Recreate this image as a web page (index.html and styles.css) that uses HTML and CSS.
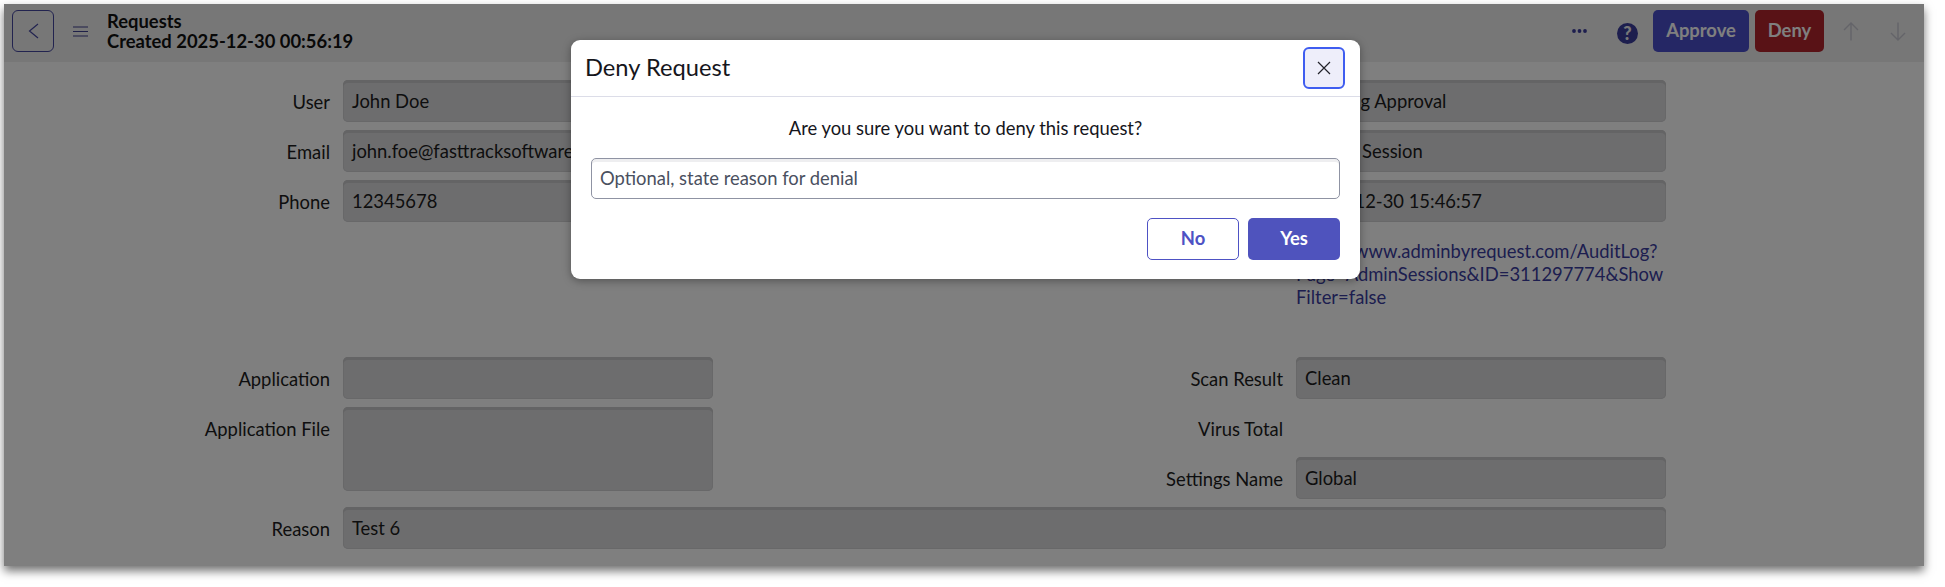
FILE: index.html
```html
<!DOCTYPE html>
<html lang="en">
<head>
<meta charset="utf-8">
<title>Requests</title>
<link rel="stylesheet" href="styles.css">
</head>
<body>
<div class="window">
  <header class="topbar">
    <button class="back" aria-label="Back">
      <svg width="11" height="16" viewBox="0 0 11 16"><path d="M10 1 L1.5 8 L10 15" /></svg>
    </button>
    <button class="menu" aria-label="Menu">
      <svg width="15" height="11" viewBox="0 0 15 11"><path d="M0 1H15M0 5.5H15M0 10H15" /></svg>
    </button>
    <div class="heading">
      <div>Requests</div>
      <div>Created 2025-12-30 00:56:19</div>
    </div>
    <div class="actions">
      <svg class="dots" width="15" height="4" viewBox="0 0 15 4"><circle cx="2" cy="2" r="1.9"/><circle cx="7.5" cy="2" r="1.9"/><circle cx="13" cy="2" r="1.9"/></svg>
      <span class="help">?</span>
      <button class="btn approve">Approve</button>
      <button class="btn deny">Deny</button>
      <button class="nav" aria-label="Previous">
        <svg width="16" height="19" viewBox="0 0 16 19"><path d="M8 18.5V1M1 8L8 1L15 8" /></svg>
      </button>
      <button class="nav" aria-label="Next">
        <svg width="16" height="19" viewBox="0 0 16 19"><path d="M8 .5V18M1 11L8 18L15 11" /></svg>
      </button>
    </div>
  </header>

  <main class="form">
    <label class="lbl">User</label><div class="field">John Doe</div>
    <label class="lbl">Status</label><div class="field">Pending Approval</div>

    <label class="lbl">Email</label><div class="field">john.foe@fasttracksoftware.com</div>
    <label class="lbl">Type</label><div class="field">Admin Session</div>

    <label class="lbl">Phone</label><div class="field">12345678</div>
    <label class="lbl">Expires</label><div class="field">2025-12-30 15:46:57</div>

    <label class="lbl link-lbl">Audit Log</label>
    <a class="link" href="#">https://www.adminbyrequest.com/AuditLog?Page=AdminSessions&amp;ID=311297774&amp;ShowFilter=false</a>

    <label class="lbl">Application</label><div class="field"></div>
    <label class="lbl">Scan Result</label><div class="field">Clean</div>

    <label class="lbl span-rows">Application File</label><div class="field area"></div>
    <label class="lbl">Virus Total</label><div class="empty"></div>

    <label class="lbl">Settings Name</label><div class="field">Global</div>

    <label class="lbl">Reason</label><div class="field wide">Test 6</div>
  </main>

  <div class="overlay">
    <section class="modal">
      <div class="modal-head">
        <h2>Deny Request</h2>
        <button class="close" aria-label="Close">
          <svg width="14" height="14" viewBox="0 0 14 14"><path d="M1 1L13 13M13 1L1 13" /></svg>
        </button>
      </div>
      <div class="modal-body">
        <p>Are you sure you want to deny this request?</p>
        <div class="reason">Optional, state reason for denial</div>
        <div class="modal-actions">
          <button class="mbtn no">No</button>
          <button class="mbtn yes">Yes</button>
        </div>
      </div>
    </section>
  </div>
</div>
</body>
</html>
```

FILE: styles.css
```css
* { box-sizing: border-box; }
html, body { margin: 0; padding: 0; background: #fff; }
body { font-family: Lato, "Open Sans", sans-serif; color: #1c1c20; overflow: hidden; height: 587px; }
button { font-family: inherit; cursor: pointer; padding: 0; background: none; border: 0; }

.window {
  position: relative;
  width: 1920px;
  height: 562px;
  margin: 4px 0 0 4px;
  background: #fff;
  box-shadow: 0 5px 9px rgba(0,0,0,.55);
}

.topbar {
  display: flex;
  align-items: center;
  height: 58px;
  padding: 0 3px 4px 8px;
  background: #eeeeef;
}
.back {
  width: 42px;
  height: 42px;
  border: 1.5px solid #44469f;
  border-radius: 6px;
  display: flex;
  align-items: center;
  justify-content: center;
}
.back svg path { fill: none; stroke: #44469f; stroke-width: 1.2; }
.menu { margin-left: 19px; width: 15px; height: 16px; display: flex; align-items: center; }
.menu svg path { fill: none; stroke: #3f4190; stroke-width: 1.1; }
.heading {
  margin-left: 19px;
  font-size: 18.4px;
  line-height: 20px;
  font-weight: 700;
  color: #111;
}
.actions { margin-left: auto; display: flex; align-items: center; }
.dots { fill: #3a3c9c; }
.help {
  margin: 4px 15px 0 30px;
  width: 21px;
  height: 21px;
  border-radius: 50%;
  background: #3a3c9c;
  color: #eeeeef;
  font-size: 18px;
  font-weight: 900;
  line-height: 21px;
  text-align: center;
}
.btn {
  height: 42px;
  padding-bottom: 3px;
  border-radius: 5px;
  color: #fff;
  font-size: 18.4px;
  font-weight: 700;
}
.approve { width: 96px; background: #4a4ecb; }
.deny { width: 69px; margin: 0 3px 0 6px; background: #b2242d; }
.nav { width: 47px; height: 42px; display: flex; align-items: center; justify-content: center; }
.nav svg path { fill: none; stroke: #c8c8d2; stroke-width: 1.4; }

.form {
  display: grid;
  grid-template-columns: 339px 370px 583px 370px;
  grid-template-rows: repeat(3, 42px) 119px repeat(4, 42px);
  row-gap: 8px;
  padding-top: 18px;
  font-size: 18.4px;
}
.lbl {
  padding: 1px 13px 0 0;
  text-align: right;
  line-height: 42px;
}
.field {
  height: 42px;
  padding: 0 9px;
  line-height: 42px;
  border-radius: 5px;
  background: #dadadc;
  box-shadow: inset 0 3px 0 #c8c8ca, inset 0 0 0 1px #d0d0d2;
  white-space: nowrap;
  overflow: hidden;
}
.area { height: 84px; grid-row: span 2; }
.span-rows { grid-row: span 2; }
.wide { grid-column: span 3; }
.link-lbl { grid-column: 3; }
.link {
  padding-top: 10px;
  line-height: 23px;
  color: #3a3d9f;
  text-decoration: none;
  overflow-wrap: anywhere;
}

.overlay {
  position: absolute;
  inset: 0;
  background: rgba(0,0,0,.5);
}
.modal {
  position: absolute;
  left: 567px;
  top: 36px;
  width: 789px;
  height: 239px;
  background: #fff;
  border-radius: 9px;
  box-shadow: 0 2px 8px rgba(0,0,0,.35);
}
.modal-head {
  display: flex;
  align-items: center;
  justify-content: space-between;
  height: 57px;
  padding: 0 15px 0 14px;
  border-bottom: 1.5px solid #dcdde8;
}
.modal-head h2 { margin: 0 0 2px; font-size: 23.7px; font-weight: 400; color: #16161c; }
.close {
  width: 42px;
  height: 42px;
  border: 2.5px solid #3f5df0;
  border-radius: 6px;
  background: #eeeefa;
  display: flex;
  align-items: center;
  justify-content: center;
}
.close svg path { fill: none; stroke: #22222a; stroke-width: 1.2; }
.modal-body { padding: 0 20px; }
.modal-body p {
  margin: 0;
  padding-top: 20px;
  height: 61px;
  line-height: 22px;
  font-size: 18.4px;
  text-align: center;
  color: #16161c;
}
.reason {
  height: 41px;
  padding: 0 8px;
  line-height: 38px;
  font-size: 18.4px;
  color: #4a5060;
  border: 1.5px solid #8f93a3;
  border-radius: 5px;
  box-shadow: inset 0 3px 0 #eeeef0;
}
.modal-actions { display: flex; justify-content: flex-end; gap: 9px; margin-top: 19px; }
.mbtn { width: 92px; height: 42px; padding-bottom: 2px; border-radius: 5px; font-size: 18.4px; font-weight: 700; }
.no { border: 1.5px solid #4e52c4; color: #4e52c4; background: #fff; }
.yes { background: #4f53bd; color: #fff; }
```
